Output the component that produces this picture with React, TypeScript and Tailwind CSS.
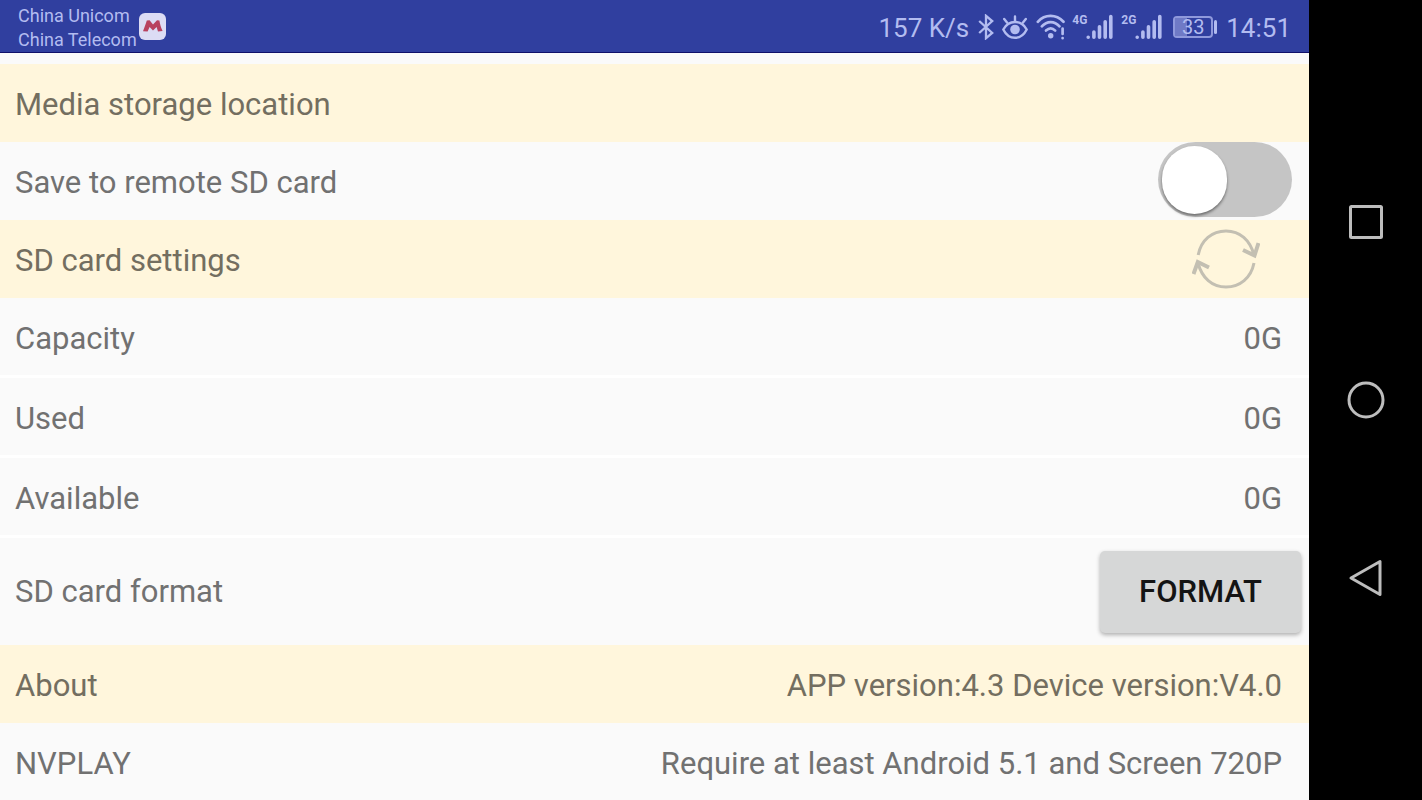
import { useState } from 'react';
import type { ReactNode } from 'react';
import clsx from 'clsx';

const AppBadge = () => (
  <svg className="h-[27px] w-[27px]" viewBox="0 0 27 27" aria-hidden="true">
    <rect width="27" height="27" rx="6" fill="#dcdcf4" />
    <path
      d="M4 18.2 C5.6 14.5 6.8 10.8 7.8 7.6 L10.6 7.2 L14 11.6 L18 7.2 L20.4 7.6 C21 11.5 22 15 23.6 18 L19 18.6 L17.6 14 L14 17.4 L10.6 14 L8.6 18.4 Z"
      fill="#b8415f"
    />
  </svg>
);

const BluetoothIcon = () => (
  <svg className="h-[26px] w-4" viewBox="0 0 16 26" fill="none" aria-hidden="true">
    <path
      d="M1.2 7 L14.2 19 L8 24.2 V1.8 L14.2 7 L1.2 19"
      stroke="currentColor"
      strokeWidth="2.3"
    />
  </svg>
);

const EyeIcon = () => (
  <svg
    className="h-[26px] w-[26px]"
    viewBox="0 0 26 26"
    fill="none"
    stroke="currentColor"
    strokeWidth="2.4"
    strokeLinecap="round"
    aria-hidden="true"
  >
    <path d="M1.3 15.5 C4 10.5 8 8 13 8 C18 8 22 10.5 24.7 15.5 C22 21 18 23.8 13 23.8 C8 23.8 4 21 1.3 15.5 Z" />
    <path d="M13 7 V2.5 M5 8.5 L2.2 5 M21 8.5 L23.8 5" />
    <circle cx="13" cy="15.5" r="4.8" fill="currentColor" stroke="none" />
  </svg>
);

const WifiIcon = () => (
  <svg
    className="h-[26px] w-[30px]"
    viewBox="0 0 30 26"
    fill="none"
    stroke="currentColor"
    strokeWidth="2.7"
    strokeLinecap="round"
    aria-hidden="true"
  >
    <path d="M1.8 7.8 C9 0 20 0 27.5 7.8" />
    <path d="M5.8 12.3 C11 6.6 18.5 6.6 23.5 12.3" />
    <path d="M10 16.6 C13 13.8 16.5 13.8 19.2 16.6" />
    <circle cx="14.7" cy="21.8" r="2.7" fill="currentColor" stroke="none" />
    <path d="M26.6 14.5 V20 M26.6 24 V24.2" />
  </svg>
);

const Signal = ({ network }: { network: string }) => (
  <span className="flex items-start">
    <span className="w-[14px] text-[12px] leading-3 font-bold">{network}</span>
    <svg
      className="h-[26px] w-[27px]"
      viewBox="0 0 27 26"
      stroke="currentColor"
      strokeWidth="3.6"
      strokeLinecap="round"
      aria-hidden="true"
    >
      <path d="M2.2 23.2 V23.3 M7.9 18 V23.3 M13.5 12.8 V23.3 M19.2 7.8 V23.3 M24.8 2.5 V23.3" />
    </svg>
  </span>
);

const Battery = ({ level }: { level: number }) => (
  <span className="flex items-center gap-px">
    <span className="relative flex h-[22px] w-10 items-center justify-center rounded-[4px] border-2 border-[#8f99dc]">
      <span
        className="absolute inset-y-0 left-0 bg-[#6f7ac6]"
        style={{ width: `${level}%` }}
      />
      <span className="relative text-[20px] leading-5">{level}</span>
    </span>
    <span className="h-[14px] w-[3px] rounded-full bg-current" />
  </span>
);

const StatusBar = () => (
  <header className="flex h-[53px] shrink-0 items-center justify-between border-b border-[#10106a] bg-[#303f9f] px-[18px] text-[#b3bcf0]">
    <div className="flex items-center gap-[2px]">
      <div className="pt-1 text-[18px] leading-6">
        <p>China Unicom</p>
        <p>China Telecom</p>
      </div>
      <AppBadge />
    </div>

    <div className="flex items-center pt-[2px]">
      <span className="pt-[2px] text-[26px] leading-8">157 K/s</span>
      <span className="ml-[9px] flex items-center gap-2">
        <BluetoothIcon />
        <EyeIcon />
        <WifiIcon />
      </span>
      <span className="ml-[6px] flex gap-2">
        <Signal network="4G" />
        <Signal network="2G" />
      </span>
      <span className="mr-[9px] ml-[11px]">
        <Battery level={33} />
      </span>
      <time className="pt-[2px] text-[26px] leading-8">14:51</time>
    </div>
  </header>
);

const RefreshIcon = () => (
  <svg
    className="h-[60px] w-[68px]"
    viewBox="0 0 68 60"
    fill="none"
    stroke="#c3bfb2"
    strokeWidth="3"
    aria-hidden="true"
  >
    <path d="M6.2 26 C9 11 20 2 34 2 C48 2 58 11 62 26" />
    <path d="M51 21 L62.5 26.5 L66.5 14" strokeWidth="4" />
    <path d="M62 34 C59 49 48 58 34 58 C20 58 10 49 6 34" />
    <path d="M1.5 45 L5.8 33 L17 38.5" strokeWidth="4" />
  </svg>
);

type RowProps = {
  label: ReactNode;
  children?: ReactNode;
  className?: string;
};

const SectionRow = ({ label, children }: RowProps) => (
  <div className="flex h-[78px] items-center justify-between bg-[#fff6dc] pt-1 pr-[27px] pl-[15px] text-[#736e60]">
    <h2>{label}</h2>
    {children}
  </div>
);

const Row = ({ label, children, className }: RowProps) => (
  <div
    className={clsx(
      'flex items-center justify-between bg-[#fafafa] pl-[15px]',
      className,
    )}
  >
    <span>{label}</span>
    {children}
  </div>
);

const NavBar = () => (
  <nav className="flex w-[113px] shrink-0 flex-col items-center justify-center gap-[138px] bg-black pb-[2px] text-[#bdbdbd]">
    <button aria-label="Recent apps">
      <svg className="size-10" viewBox="0 0 40 40" fill="none" stroke="currentColor" strokeWidth="3">
        <rect x="4.5" y="4.5" width="31" height="31" rx="1" />
      </svg>
    </button>
    <button aria-label="Home">
      <svg className="size-10" viewBox="0 0 40 40" fill="none" stroke="currentColor" strokeWidth="3">
        <circle cx="20" cy="20" r="17" />
      </svg>
    </button>
    <button aria-label="Back">
      <svg
        className="size-10"
        viewBox="0 0 40 40"
        fill="none"
        stroke="currentColor"
        strokeWidth="3"
        strokeLinejoin="round"
      >
        <path d="M5 20 L34 3.5 V36.5 Z" />
      </svg>
    </button>
  </nav>
);

const storage = [
  { label: 'Capacity', value: '0G' },
  { label: 'Used', value: '0G' },
  { label: 'Available', value: '0G' },
];

const App = () => {
  const [remote, setRemote] = useState(false);

  return (
    <div className="flex min-h-screen bg-[#fafafa] font-[Roboto,sans-serif]">
      <div className="flex min-w-0 flex-1 flex-col">
        <StatusBar />

        <main className="flex-1 pt-[11px] text-[31px] leading-9 text-[#717171]">
          <SectionRow label="Media storage location" />

          <Row
            className="h-[78px] pr-[17px]"
            label={
              <label htmlFor="remote" className="block pt-1">
                Save to remote SD card
              </label>
            }
          >
            <input
              id="remote"
              type="checkbox"
              role="switch"
              checked={remote}
              onChange={() => setRemote(!remote)}
              className="flex h-[75px] w-[134px] appearance-none items-center self-start rounded-full bg-[#c5c5c5] px-1 before:h-[68px] before:w-[65px] before:rounded-full before:bg-white before:shadow-[0_2px_3px_rgba(0,0,0,0.45)] checked:justify-end checked:bg-[#303f9f]"
            />
          </Row>

          <div className="flex h-[78px] items-center justify-between bg-[#fff6dc] pr-[49px] pl-[15px] text-[#736e60]">
            <h2 className="pt-1">SD card settings</h2>
            <button aria-label="Refresh">
              <RefreshIcon />
            </button>
          </div>

          {storage.map(({ label, value }) => (
            <Row
              key={label}
              label={label}
              className="h-20 border-b-[3px] border-white pt-1 pr-[27px]"
            >
              <span>{value}</span>
            </Row>
          ))}

          <Row label="SD card format" className="h-[107px] pr-2">
            <button className="h-[82px] w-[201px] rounded-[5px] bg-[#d6d7d7] font-medium text-[#141414] shadow-[0_2px_4px_rgba(0,0,0,0.3)]">
              FORMAT
            </button>
          </Row>

          <SectionRow label="About">
            <span>APP version:4.3 Device version:V4.0</span>
          </SectionRow>

          <Row label="NVPLAY" className="h-[78px] pt-1 pr-[27px]">
            <span>Require at least Android 5.1 and Screen 720P</span>
          </Row>
        </main>
      </div>

      <NavBar />
    </div>
  );
};

export default App;
